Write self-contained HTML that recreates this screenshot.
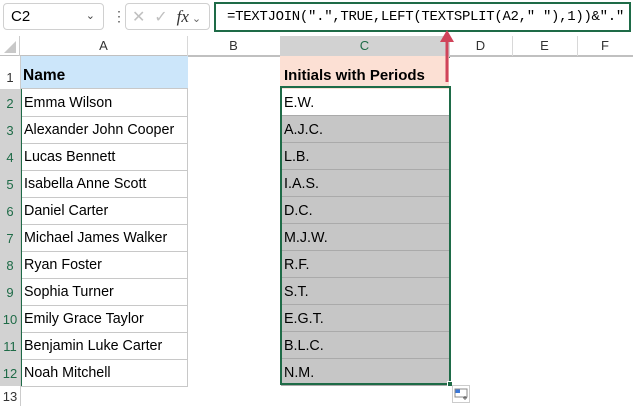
<!DOCTYPE html><html><head><style>
body{margin:0;width:633px;height:411px;background:#fff;position:relative;overflow:hidden;font-family:"Liberation Sans",sans-serif;}
.a{position:absolute;box-sizing:border-box;}
.t{font-size:14.3px;color:#000;line-height:27px;}
.rh{position:absolute;left:0;width:20px;text-align:center;font-size:13px;color:#333;background:#fff;}
.ch{position:absolute;top:36px;height:20px;line-height:20px;text-align:center;font-size:13px;color:#333;border-right:1px solid #d8d8d8;border-bottom:1px solid #c0c0c0;}
</style></head><body>
<div class="a" style="left:0;top:0;width:633px;height:36px;background:#fff"></div>
<div class="a" style="left:3px;top:3px;width:101px;height:27px;border:1px solid #d0d0d0;border-radius:4px;font-size:15px;line-height:25px;padding-left:7px">C2<span style="position:absolute;right:8px;top:0;font-size:11px;color:#444">&#8964;</span></div>
<div class="a" style="left:112px;top:8px;font-size:14px;color:#555">&#8942;</div>
<div class="a" style="left:125px;top:3px;width:85px;height:27px;border:1px solid #d0d0d0;border-radius:4px;color:#c0c0c0;font-size:16px;line-height:25px;padding-left:6px">✕&nbsp;&nbsp;✓&nbsp;&nbsp;<i style="font-family:'Liberation Serif';color:#333;font-size:17px">fx</i><span style="font-size:11px;color:#666"> &#8964;</span></div>
<div class="a" style="left:214px;top:2px;width:417px;height:30px;border:2px solid #1e6b47;font-family:'Liberation Mono',monospace;font-size:14px;line-height:26px;padding-left:11px;letter-spacing:-0.3px">=TEXTJOIN(".",TRUE,LEFT(TEXTSPLIT(A2," "),1))&amp;"."</div>
<div class="a" style="left:0;top:36px;width:633px;height:20px;background:#fff;border-bottom:1px solid #c0c0c0"></div>
<div class="a" style="left:0;top:36px;width:20px;height:20px;border-right:1px solid #ccc"><svg width="20" height="20"><polygon points="16,5 16,17 4,17" fill="#c8c8c8"/></svg></div>
<div class="ch" style="left:20px;width:167px">A</div>
<div class="ch" style="left:187px;width:93px">B</div>
<div class="ch" style="left:280px;width:169px;background:#d2d2d2;color:#1e6b47;border-bottom:2px solid #1e6b47">C</div>
<div class="ch" style="left:449px;width:63px">D</div>
<div class="ch" style="left:512px;width:65px">E</div>
<div class="ch" style="left:577px;width:56px">F</div>
<div class="a" style="left:20px;top:56px;width:168px;height:33px;background:#cce6fa;border-bottom:1px solid #c8c8c8;font-weight:bold;font-size:15.5px;padding:6px 0 0 3px;line-height:27px">Name</div>
<div class="a" style="left:280px;top:56px;width:169px;height:33px;background:#fce0d4;font-weight:bold;font-size:15px;padding:6px 0 0 4px;line-height:27px">Initials with Periods</div>
<div class="rh" style="top:56px;height:33px;line-height:44px;border-right:1px solid #ccc">1</div>
<div id="rows"></div>
<script>
var n=["Emma Wilson","Alexander John Cooper","Lucas Bennett","Isabella Anne Scott","Daniel Carter","Michael James Walker","Ryan Foster","Sophia Turner","Emily Grace Taylor","Benjamin Luke Carter","Noah Mitchell"];
var c=["E.W.","A.J.C.","L.B.","I.A.S.","D.C.","M.J.W.","R.F.","S.T.","E.G.T.","B.L.C.","N.M."];
var h="";
for(var i=0;i<11;i++){var y=89+i*27;
h+='<div class="rh" style="top:'+y+'px;height:27px;line-height:30px;background:#d2d2d2;color:#1e6b47;border-right:2px solid #1e6b47;border-bottom:1px solid #bbb">'+(i+2)+'</div>';
h+='<div class="a t" style="left:20px;top:'+y+'px;width:168px;height:28px;border:1px solid #c8c8c8;border-top:none;padding:1px 0 0 3px">'+n[i]+'</div>';
h+='<div class="a t" style="left:281px;top:'+y+'px;width:168px;height:27px;background:'+(i?'#c6c6c6':'#fff')+';border-bottom:1px solid #aaa;padding:1px 0 0 3px">'+c[i]+'</div>';}
h+='<div class="rh" style="top:386px;height:20px;line-height:22px;border-right:1px solid #ccc">13</div>';
document.getElementById('rows').innerHTML=h;
</script>
<div class="a" style="left:280px;top:86px;width:171px;height:299px;border:2px solid #1e6b47"></div>
<div class="a" style="left:447px;top:381px;width:6px;height:6px;background:#1e6b47;border:1px solid #fff"></div>
<div class="a" style="left:452px;top:385px;width:18px;height:18px;border:1px solid #ccc;background:#fff"><svg width="16" height="16"><rect x="2" y="3" width="5" height="4" fill="#3c78d8"/><rect x="2" y="3" width="12" height="8" fill="none" stroke="#888"/><path d="M10 12h4M12 10v4" stroke="#666"/></svg></div>
<svg class="a" style="left:438px;top:28px" width="20" height="56"><path d="M9 54V8" stroke="#d0445a" stroke-width="3"/><polygon points="2,14 9,2 16,14" fill="#d0445a"/></svg>
</body></html>
